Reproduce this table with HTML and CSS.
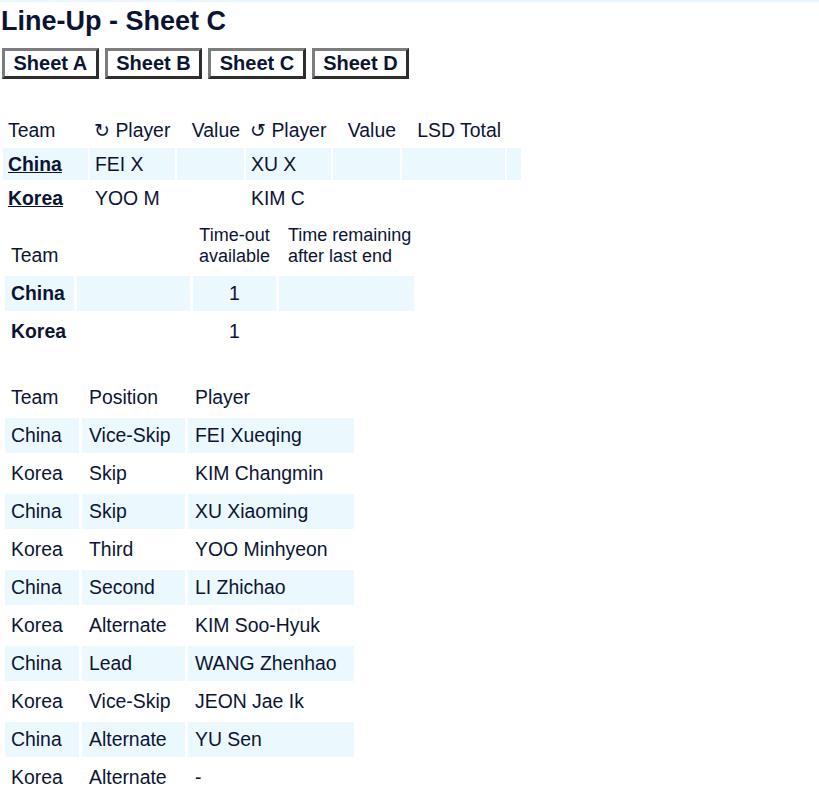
FILE: index.html
```html
<!DOCTYPE html>
<html>
<head>
<meta charset="utf-8">
<title>Line-Up - Sheet C</title>
<link rel="stylesheet" href="styles.css">
</head>
<body>
<div class="stripe"></div>
<div class="page">
  <h1 class="title">Line-Up - Sheet C</h1>
  <div class="sheets">
    <a class="sheet-btn" href="#">Sheet A</a>
    <a class="sheet-btn" href="#">Sheet B</a>
    <a class="sheet-btn" href="#">Sheet C</a>
    <a class="sheet-btn" href="#">Sheet D</a>
  </div>

  <table class="lsd">
    <thead>
      <tr>
        <th class="c-team">Team</th>
        <th class="c-player">↻ Player</th>
        <th class="c-value num">Value</th>
        <th class="c-player">↺ Player</th>
        <th class="c-value num">Value</th>
        <th class="c-total num">LSD Total</th>
        <th class="c-extra"></th>
      </tr>
    </thead>
    <tbody>
      <tr class="shade">
        <td><a class="team-link" href="#">China</a></td>
        <td>FEI X</td>
        <td class="num"></td>
        <td>XU X</td>
        <td class="num"></td>
        <td class="num"></td>
        <td></td>
      </tr>
      <tr>
        <td><a class="team-link" href="#">Korea</a></td>
        <td>YOO M</td>
        <td class="num"></td>
        <td>KIM C</td>
        <td class="num"></td>
        <td class="num"></td>
        <td></td>
      </tr>
    </tbody>
  </table>

  <table class="timeouts">
    <thead>
      <tr>
        <th class="t-team">Team</th>
        <th class="t-blank"></th>
        <th class="t-avail center">Time-out<br>available</th>
        <th class="t-remain">Time remaining<br>after last end</th>
      </tr>
    </thead>
    <tbody>
      <tr class="shade">
        <td class="bold">China</td>
        <td></td>
        <td class="center">1</td>
        <td></td>
      </tr>
      <tr>
        <td class="bold">Korea</td>
        <td></td>
        <td class="center">1</td>
        <td></td>
      </tr>
    </tbody>
  </table>

  <table class="lineup">
    <thead>
      <tr>
        <th class="l-team">Team</th>
        <th class="l-pos">Position</th>
        <th class="l-player">Player</th>
      </tr>
    </thead>
    <tbody>
      <tr class="shade"><td>China</td><td>Vice-Skip</td><td>FEI Xueqing</td></tr>
      <tr><td>Korea</td><td>Skip</td><td>KIM Changmin</td></tr>
      <tr class="shade"><td>China</td><td>Skip</td><td>XU Xiaoming</td></tr>
      <tr><td>Korea</td><td>Third</td><td>YOO Minhyeon</td></tr>
      <tr class="shade"><td>China</td><td>Second</td><td>LI Zhichao</td></tr>
      <tr><td>Korea</td><td>Alternate</td><td>KIM Soo-Hyuk</td></tr>
      <tr class="shade"><td>China</td><td>Lead</td><td>WANG Zhenhao</td></tr>
      <tr><td>Korea</td><td>Vice-Skip</td><td>JEON Jae Ik</td></tr>
      <tr class="shade"><td>China</td><td>Alternate</td><td>YU Sen</td></tr>
      <tr><td>Korea</td><td>Alternate</td><td>-</td></tr>
    </tbody>
  </table>
</div>
</body>
</html>
```

FILE: styles.css
```css
html, body {
  margin: 0;
  padding: 0;
  background: #ffffff;
}

body {
  font-family: "Liberation Sans", Arial, sans-serif;
  font-size: 19.4px;
  color: #0b1533;
}

.stripe {
  height: 2px;
  background: #eaf8fd;
}

.page {
  padding-left: 1px;
}

.title {
  margin: 4px 0 0 0;
  font-size: 27px;
  line-height: 31px;
  font-weight: bold;
  color: #0b1533;
}

.sheets {
  display: flex;
  gap: 6px;
  margin: 11px 0 0 1px;
}

.sheet-btn {
  display: block;
  box-sizing: border-box;
  height: 31px;
  padding: 0 8.5px;
  border-style: solid;
  border-width: 3px;
  border-color: #7d7d7d #2e2e2e #2e2e2e #7d7d7d;
  background: #ffffff;
  color: #0b1533;
  font-size: 20px;
  font-weight: bold;
  line-height: 25px;
  text-decoration: none;
  white-space: nowrap;
}

table {
  border-collapse: separate;
  table-layout: fixed;
  font-size: 19.4px;
  color: #0b1533;
}

th, td {
  box-sizing: border-box;
  font-weight: normal;
  text-align: left;
  white-space: nowrap;
  overflow: visible;
}

.shade td {
  background: #ebf8fd;
}

.num {
  text-align: right;
}

.center {
  text-align: center;
}

.bold {
  font-weight: bold;
}

/* LSD table */
.lsd {
  width: 522px;
  margin-top: 33px;
  border-spacing: 2px;
}

.lsd th, .lsd td {
  padding: 5px 4px 5px 5px;
  line-height: 22px;
  height: 32px;
}

.lsd .c-team { width: 85px; }
.lsd .c-player { width: 85px; padding-left: 4px; }
.lsd .c-value { width: 67px; }
.lsd .c-total { width: 103px; }
.lsd .c-extra { width: 14px; }

.team-link {
  color: #0b1533;
  font-weight: bold;
  text-decoration: underline;
}

/* Time-out table */
.timeouts {
  width: 415px;
  margin: -1px 0 0 1px;
  border-spacing: 3px;
}

.timeouts th, .timeouts td {
  padding: 7px 6px;
  line-height: 21px;
}

.timeouts th {
  vertical-align: bottom;
  line-height: 20.5px;
  font-size: 18px;
}

.timeouts th.t-team {
  font-size: 19.4px;
  line-height: 21px;
}

.timeouts .t-team { width: 69px; }
.timeouts .t-blank { width: 113px; }
.timeouts .t-avail { width: 83px; text-align: center; padding: 7px 2px; }
.timeouts .t-remain { width: 135px; padding-left: 9px; }

/* Line-up table */
.lineup {
  width: 355px;
  margin: 25px 0 0 1px;
  border-spacing: 3px;
}

.lineup th, .lineup td {
  padding: 7px 6px;
  line-height: 21px;
  height: 35px;
}

.lineup .l-team { width: 74px; }
.lineup .l-pos { width: 103px; padding-left: 7px; }
.lineup .l-player { width: 166px; padding-left: 7px; }
.lineup td + td { padding-left: 7px; }
```
